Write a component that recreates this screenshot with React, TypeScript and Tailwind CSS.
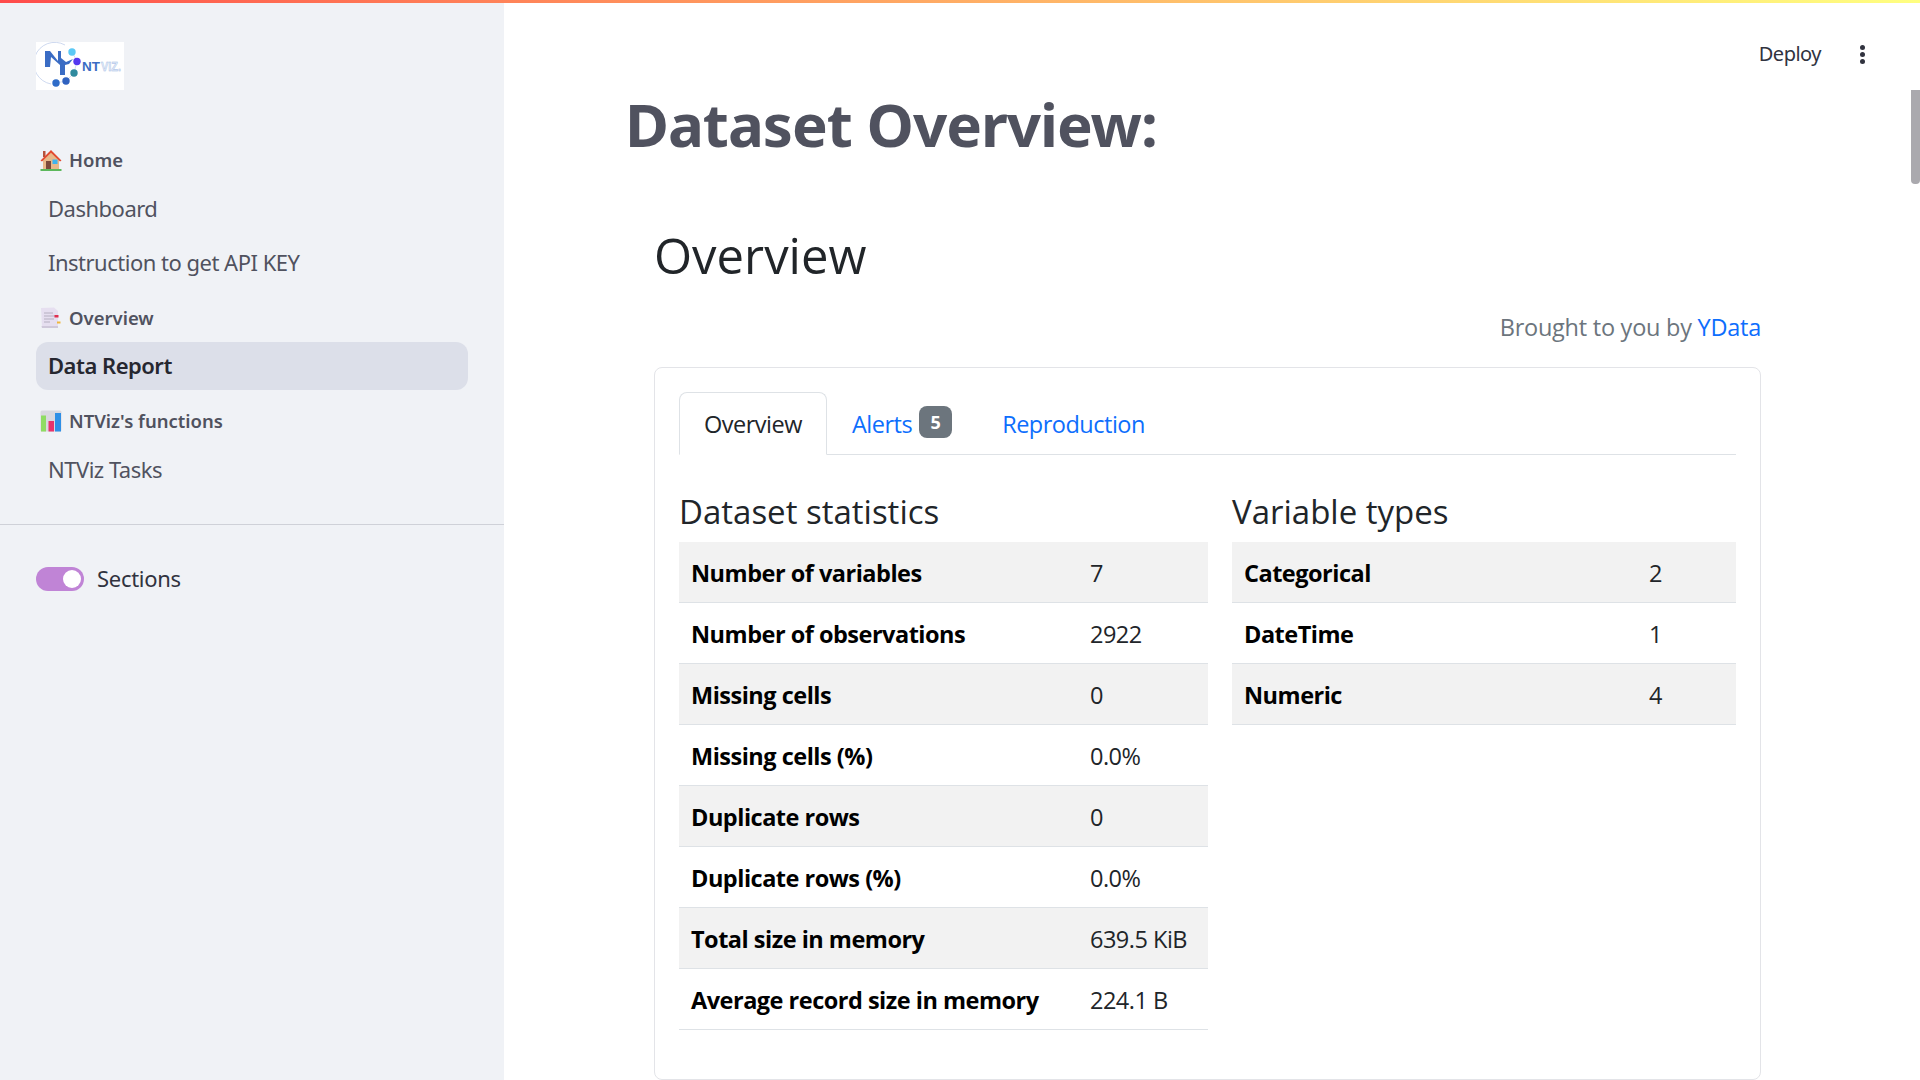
import type { ReactNode } from 'react';

const SIDE_FONT = "font-['Noto_Sans',sans-serif]";
const BODY_FONT = "font-['Open_Sans',sans-serif]";

const DATASET_STATS: [string, string][] = [
  ['Number of variables', '7'],
  ['Number of observations', '2922'],
  ['Missing cells', '0'],
  ['Missing cells (%)', '0.0%'],
  ['Duplicate rows', '0'],
  ['Duplicate rows (%)', '0.0%'],
  ['Total size in memory', '639.5 KiB'],
  ['Average record size in memory', '224.1 B'],
];

const VARIABLE_TYPES: [string, string][] = [
  ['Categorical', '2'],
  ['DateTime', '1'],
  ['Numeric', '4'],
];

function Logo() {
  return (
    <svg width="88" height="48" viewBox="0 0 88 48" className="bg-white">
      <path d="M29 3 A21 21 0 1 0 15 42" fill="none" stroke="#b9c9e8" strokeWidth="0.7" />
      <path d="M36 10 L41 19 L38 31 L30 39 L20 41" fill="none" stroke="#b9c9e8" strokeWidth="0.6" />
      <path d="M9 9 L14 9 L22 19 L22 9 L25 9 L25 16 L30 20 L37 17 L33 22 L29 23 L29 33 L24 33 L24 23 L15 15 L14 25 L9 25 Z" fill="#3a6cc4" />
      <circle cx="36" cy="10" r="3.7" fill="#5cc9f5" />
      <circle cx="41" cy="19.500" r="3.7" fill="#5438f0" />
      <circle cx="38" cy="31" r="3.7" fill="#2f8a9e" />
      <circle cx="30" cy="39" r="3.7" fill="#2f62c0" />
      <circle cx="20" cy="41" r="3.7" fill="#2f6cc8" />
      <text x="46" y="28.500" fontSize="13" fontWeight="900" fill="#3a6cc4" fontFamily="Liberation Sans, sans-serif" textLength="18" lengthAdjust="spacingAndGlyphs">
        NT
      </text>
      <text x="65" y="28.500" fontSize="12.500" fontWeight="700" fill="#e4ecf8" stroke="#9db8e4" strokeWidth="0.4" fontFamily="Liberation Sans, sans-serif" textLength="20" lengthAdjust="spacingAndGlyphs">
        VIZ.
      </text>
    </svg>
  );
}

function HouseIcon() {
  return (
    <svg width="22" height="22" viewBox="0 0 22 22">
      <rect x="3" y="2" width="2.500" height="6" fill="#b5533c" />
      <path d="M3 11 L11 3 L19 11 L19 20 L3 20 Z" fill="#e8b98a" />
      <path d="M0.500 11.500 L11 1 L21.500 11.500 L20 12.500 L11 3.800 L2 12.500 Z" fill="#e2492f" />
      <rect x="6" y="12" width="5" height="8" fill="#7b4a3c" />
      <rect x="12.500" y="10.500" width="5" height="4.500" fill="#3fb4ee" />
      <rect x="0.500" y="20" width="21" height="2" fill="#5cb85c" />
    </svg>
  );
}

function DocIcon() {
  return (
    <svg width="22" height="22" viewBox="0 0 22 22">
      <path d="M1 1 L14 0.500 L18 4 L18 21 L2 21 Z" fill="#e6dff0" />
      <path d="M1.500 19 H18 V21 H2 Z" fill="#cfc8da" />
      <path d="M4 6 H13 M4 9 H16 M4 12 H14 M4 15 H10" stroke="#a8a2b4" strokeWidth="0.8" />
      <rect x="14.500" y="8" width="4" height="2.500" fill="#e0304f" />
      <rect x="17" y="14.500" width="3.500" height="2" fill="#efb63c" />
    </svg>
  );
}

function ChartIcon() {
  return (
    <svg width="22" height="22" viewBox="0 0 22 22">
      <rect x="0.500" y="0.500" width="21" height="21" rx="1.500" fill="#d9d8e0" />
      <rect x="1" y="5.500" width="5" height="16" fill="#8fdc63" />
      <rect x="8.500" y="11" width="5.500" height="10.500" fill="#e8336b" />
      <rect x="15" y="3" width="6" height="18.500" fill="#2f8fe6" />
    </svg>
  );
}

function NavHeader({ icon, label, className }: { icon: ReactNode; label: string; className: string }) {
  return (
    <div className={`flex items-center gap-[7px] pl-[40px] text-[18.500px] font-semibold leading-[24px] text-[#50525f] ${className}`}>
      {icon}
      <span>{label}</span>
    </div>
  );
}

function NavLink({ label, active }: { label: string; active?: boolean }) {
  return (
    <div
      className={`mx-[36px] flex h-[48px] w-[432px] items-center rounded-[12px] px-[12px] pb-[2px] text-[22px] tracking-[-0.5px] ${
        active ? 'bg-[#dcdfe9] font-semibold text-[#262730]' : 'text-[#50525f]'
      }`}
    >
      {label}
    </div>
  );
}

function Sidebar() {
  return (
    <aside className={`flex h-full w-[504px] shrink-0 flex-col bg-[#f0f2f6] ${SIDE_FONT}`}>
      <div className="ml-[36px] mt-[39px]">
        <Logo />
      </div>
      <NavHeader icon={<HouseIcon />} label="Home" className="mt-[58px]" />
      <div className="mt-[13px]">
        <NavLink label="Dashboard" />
      </div>
      <div className="mt-[6px]">
        <NavLink label="Instruction to get API KEY" />
      </div>
      <NavHeader icon={<DocIcon />} label="Overview" className="mt-[19px]" />
      <div className="mt-[12px]">
        <NavLink label="Data Report" active />
      </div>
      <NavHeader icon={<ChartIcon />} label="NTViz's functions" className="mt-[19px]" />
      <div className="mt-[13px]">
        <NavLink label="NTViz Tasks" />
      </div>
      <div className="mt-[30px] h-px w-full bg-[#cfd1d8]" />
      <div className="ml-[36px] mt-[37px] flex items-center gap-[13px]">
        <div className="flex h-[24px] w-[48px] items-center justify-end rounded-full bg-[#c084d6] pr-[3px]">
          <div className="h-[18px] w-[18px] rounded-full bg-white" />
        </div>
        <span className="text-[22px] tracking-[-0.3px] text-[#31333f]">Sections</span>
      </div>
    </aside>
  );
}

function StatTable({ rows, labelWidth, className }: { rows: [string, string][]; labelWidth: string; className: string }) {
  return (
    <div className={className}>
      <h4 className="h-[56px] pt-[3px] text-[33px] font-medium leading-[46px] text-[#212529]">
        {rows === DATASET_STATS ? 'Dataset statistics' : 'Variable types'}
      </h4>
      <div>
        {rows.map(([label, value], i) => (
          <div
            key={label}
            className={`flex h-[61px] items-center border-b border-[#dee2e6] pt-[4px] text-[23.500px] tracking-[-0.5px] text-[#212529] ${
              i % 2 === 0 ? 'bg-[#f2f2f2]' : 'bg-white'
            }`}
          >
            <div className={`shrink-0 pl-[12px] font-bold text-black ${labelWidth}`}>{label}</div>
            <div>{value}</div>
          </div>
        ))}
      </div>
    </div>
  );
}

function ReportCard() {
  return (
    <div className={`mt-[22px] h-[713px] w-[1107px] rounded-[8px] border border-[#e3e4e8] px-[24px] pt-[24px] ${BODY_FONT}`}>
      <div className="flex h-[63px] items-stretch border-b border-[#dee2e6] text-[23.500px] tracking-[-0.5px]">
        <div className="-mb-px flex w-[148px] items-center justify-center rounded-t-[8px] border border-b-white border-[#dee2e6] bg-white pt-[3px] text-[#212529]">
          Overview
        </div>
        <div className="ml-[25px] flex items-center pt-[4px] text-[#0d6efd]">
          Alerts
          <span className="relative -top-[3px] ml-[7px] flex h-[32px] w-[33px] items-center justify-center rounded-[8px] bg-[#6c757d] text-[18px] font-bold leading-none tracking-normal text-white">
            5
          </span>
        </div>
        <div className="ml-[50px] flex items-center pt-[4px] text-[#0d6efd]">Reproduction</div>
      </div>
      <div className="mt-[31px] flex gap-[24px]">
        <StatTable rows={DATASET_STATS} labelWidth="w-[411px]" className="w-[529px]" />
        <StatTable rows={VARIABLE_TYPES} labelWidth="w-[417px]" className="w-[504px]" />
      </div>
    </div>
  );
}

export default function App() {
  return (
    <div className="relative flex h-[1080px] w-[1920px] flex-col overflow-hidden bg-white">
      <div className="h-[3px] w-full shrink-0 bg-gradient-to-r from-[#ff4b4b] to-[#ffff80]" />
      <div className="flex min-h-0 flex-1">
        <Sidebar />
        <main className="min-w-0 flex-1">
          <header className={`flex h-[85px] items-start justify-end pt-[37px] pr-[55px] ${SIDE_FONT}`}>
            <span className="text-[20px] leading-[28px] tracking-[-0.5px] text-[#31333f]">Deploy</span>
            <div className="ml-[39px] mt-[5px] flex flex-col gap-[2px]">
              <span className="h-[5px] w-[5px] rounded-full bg-[#31333f]" />
              <span className="h-[5px] w-[5px] rounded-full bg-[#31333f]" />
              <span className="h-[5px] w-[5px] rounded-full bg-[#31333f]" />
            </div>
          </header>
          <h1 className={`ml-[121px] text-[60px] font-bold leading-[72px] tracking-[-1px] text-[#50525f] ${SIDE_FONT}`}>Dataset Overview:</h1>
          <div className="ml-[150px] w-[1107px]">
            <h2 className={`mt-[65px] text-[49px] font-medium leading-[60px] text-[#212529] ${BODY_FONT}`}>Overview</h2>
            <p className={`mt-[24px] text-right text-[23.500px] leading-[36px] tracking-[-0.25px] text-[#6c757d] ${BODY_FONT}`}>
              Brought to you by <span className="text-[#0d6efd]">YData</span>
            </p>
            <ReportCard />
          </div>
        </main>
      </div>
      <div className="absolute right-0 top-[90px] h-[94px] w-[9px] rounded-b-[4px] bg-[#aaa9ae]" />
    </div>
  );
}
